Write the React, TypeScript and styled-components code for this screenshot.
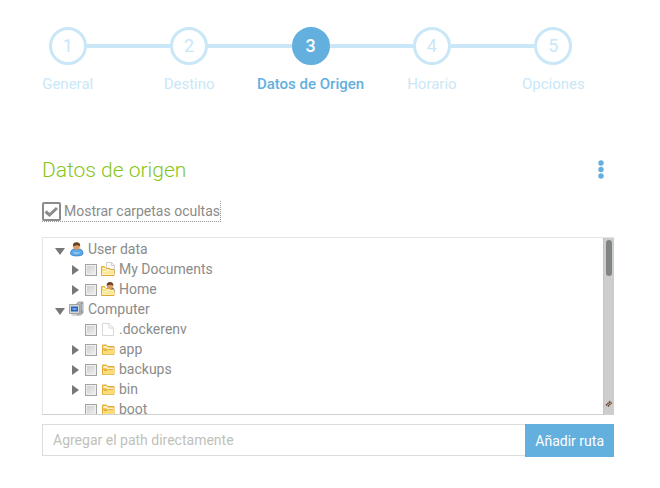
import React, { useState } from "react";
import styled, { createGlobalStyle } from "styled-components";

const GlobalStyle = createGlobalStyle`
  * { box-sizing: border-box; }
  body {
    margin: 0;
    background: #fff;
    color: #8b8b8b;
    font-family: Roboto, "Liberation Sans", sans-serif;
    font-size: 14px;
    line-height: 20px;
  }
  button, input { font: inherit; }
`;

const Page = styled.main`
  padding: 27px 46px 30px 42px;
`;

const Steps = styled.ol`
  display: grid;
  grid-template-columns: repeat(5, 1fr);
  list-style: none;
  margin: 0 0 0 -35px;
  padding: 0;
`;

const Step = styled.li<{ $active: boolean }>`
  text-align: center;
  font-size: 15px;
  font-weight: ${(p) => (p.$active ? 500 : 400)};
  color: ${(p) => (p.$active ? "#63afde" : "#c9e7f7")};
`;

const Track = styled.div`
  display: flex;
  align-items: center;
  margin-bottom: 9px;
`;

const Line = styled.span<{ $hidden: boolean }>`
  flex: 1;
  height: 4px;
  background: ${(p) => (p.$hidden ? "transparent" : "#c9e7f7")};
`;

const Circle = styled.span<{ $active: boolean }>`
  width: 38px;
  height: 38px;
  border-radius: 50%;
  border: 3px solid ${(p) => (p.$active ? "#63afde" : "#c9e7f7")};
  background: ${(p) => (p.$active ? "#63afde" : "#fff")};
  color: ${(p) => (p.$active ? "#fff" : "#c9e7f7")};
  font-size: 18px;
  line-height: 32px;
`;

const Header = styled.header`
  display: flex;
  align-items: center;
  justify-content: space-between;
  margin: 61px 0 16px;
`;

const Title = styled.h1`
  margin: 0;
  color: #86c616;
  font-size: 21px;
  font-weight: 300;
  line-height: 30px;
`;

const MenuButton = styled.button`
  display: flex;
  padding: 4px 10px;
  border: 0;
  background: none;
  cursor: pointer;
`;

const HiddenToggle = styled.label`
  display: flex;
  align-items: center;
  gap: 3px;
  width: max-content;
  height: 21px;
  margin-bottom: 15px;
  border: 1px dotted #999;
  border-width: 0 1px 1px 0;
`;

const ToggleBox = styled.input`
  appearance: none;
  width: 19px;
  height: 19px;
  margin: 0;
  border: 2px solid #8b8b8b;
  border-radius: 2px;
  background: #fff;
  &:checked {
    background: #fff
      url("data:image/svg+xml,%3Csvg xmlns='http://www.w3.org/2000/svg' viewBox='0 0 15 15'%3E%3Cpath d='M1.500 7.500 5.500 11 13 4' fill='none' stroke='%238b8b8b' stroke-width='3'/%3E%3C/svg%3E")
      center / 15px 15px no-repeat;
  }
`;

const TreeFrame = styled.div`
  display: flex;
  height: 178px;
  border: 1px solid #e4e4e0;
  border-bottom-color: #d0d0d0;
  border-right: 0;
`;

const Tree = styled.ul`
  flex: 1;
  margin: 0;
  padding: 1px 0 0 10px;
  list-style: none;
  overflow-y: auto;
  scrollbar-width: none;
`;

const Row = styled.li<{ $level: number }>`
  display: flex;
  align-items: center;
  height: 20px;
  padding-left: ${(p) => p.$level * 16}px;
  white-space: nowrap;
`;

const Caret = styled.button`
  display: flex;
  width: 16px;
  height: 16px;
  padding: 0;
  border: 0;
  background: none;
`;

const Indent = styled.span`
  width: 16px;
`;

const RowLabel = styled.label`
  display: flex;
  align-items: center;
  gap: 3px;
`;

const RowCheck = styled.input`
  appearance: none;
  width: 12px;
  height: 12px;
  margin: 2px 0 0;
  border: 1px solid #a3a3a3;
  background: linear-gradient(135deg, #ccc, #f2f2f2);
  box-shadow: inset 0 0 0 1px #f0f0f0;
  &:checked { background: #63afde; }
`;

const ScrollRail = styled.div`
  display: flex;
  flex-direction: column;
  align-items: center;
  justify-content: space-between;
  width: 11px;
  padding: 2px 0 7px;
  background: #cdcdcd;
  border-left: 1px dotted #bbb;
`;

const Thumb = styled.span`
  width: 6px;
  height: 36px;
  border-radius: 3px;
  background: #808583;
`;

const PathForm = styled.form`
  display: flex;
  margin-top: 9px;
`;

const PathInput = styled.input`
  flex: 1;
  min-width: 0;
  height: 32px;
  padding: 0 10px;
  border: 1px solid #dcdcdc;
  border-right: 0;
  border-radius: 0;
  color: #8b8b8b;
  outline: 0;
  &::placeholder { color: #bfbfbb; opacity: 1; }
`;

const AddButton = styled.button`
  height: 33px;
  padding: 0 10px;
  border: 0;
  background: #63afde;
  color: #fff;
`;

type IconName = "user" | "docs" | "home" | "computer" | "file" | "folder";

const Folder = () => (
  <>
    <path d="M2.500 13.500v-9.500h4l1 1.500h6.500v8z" fill="#f2c14c" stroke="#e2ab35" />
    <path d="M4 7V6h2.500l1 1.500H13v1" fill="none" stroke="#fffbe6" strokeWidth="1.300" />
    <path d="M3.500 13V9.500H7l1-1h5.500V13z" fill="#f9dc72" stroke="#fbe9a4" strokeWidth=".6" />
    <path d="M4 9.500h3l1-1.200h5" fill="none" stroke="#d99c2c" strokeWidth=".8" />
  </>
);

const LowFolder = () => (
  <>
    <path d="M1.500 14.500v-9h3l1 2h4.500v1h4v6z" fill="#f9de7c" stroke="#e2a733" />
    <path d="M3 7.500h2.500l1 1.500h3" fill="none" stroke="#fffbe6" />
    <path d="M2.500 13.500v-3H7l1-1h5.500v4z" fill="#fbe694" stroke="#fff8d8" strokeWidth=".7" />
  </>
);

function Icon({ name }: { name: IconName }) {
  return (
    <svg width="16" height="16" viewBox="0 0 16 16" aria-hidden="true">
      {name === "folder" && <Folder />}
      {name === "file" && (
        <path d="M2.500 2.500h6.500l4.500 4.500v7.500h-11zM9 2.500v4.500h4.500" fill="#fff" stroke="#d8d8d8" />
      )}
      {name === "docs" && (
        <>
          <path d="M6.500 1.500h5l3 3v8h-8zM11.500 1.500v3h3" fill="#fafafa" stroke="#cfcfcf" />
          <LowFolder />
        </>
      )}
      {name === "home" && (
        <>
          <path d="M6 10V9q0-3 4-3t4.500 3v2H6z" fill="#4c7796" />
          <circle cx="10" cy="5" r="3" fill="#dc9b62" />
          <path d="M6.500 4.800Q6.500 1 10 1t3.500 3.800Q11 2.800 6.500 4.800z" fill="#6a4024" />
          <LowFolder />
        </>
      )}
      {name === "user" && (
        <>
          <path d="M1.500 13q0-5 4-5h4.500q4 0 4 5-1 2-6.300 2t-6.200-2z" fill="#5aa8e6" stroke="#3d83c4" strokeWidth=".8" />
          <circle cx="7.500" cy="5.500" r="3.300" fill="#dc9a64" />
          <path d="M4 5.500Q3.500 1.300 7.500 1.300t3.700 4.200Q8.500 3.200 4 5.500z" fill="#67401f" />
          <path d="M4 11q3.500 4 7 0" fill="#8ac5f3" stroke="#8ac5f3" />
        </>
      )}
      {name === "computer" && (
        <>
          <path d="M8 3V2l2-1h4v11l-2.500 2H8z" fill="#bfc2c4" stroke="#8f9498" strokeWidth=".8" />
          <path d="M12.300 2v10.500" stroke="#83888d" strokeWidth="1.200" />
          <path d="M13.500 4h-1M13.500 6h-1M13.500 8h-1" stroke="#ecedee" />
          <path d="M.5 3.500h10v9H.5z" fill="#d3d5d7" stroke="#a0a4a8" />
          <path d="M2 5.500h7v5H2z" fill="#2c66bd" />
          <path d="M3.500 7h4v2h-4z" fill="#67a4ec" />
          <path d="M2.500 14h7" stroke="#a9adb0" />
        </>
      )}
    </svg>
  );
}

interface Entry {
  label: string;
  level: number;
  icon: IconName;
  caret?: "open" | "closed";
}

const entries: Entry[] = [
  { label: "User data", level: 0, icon: "user", caret: "open" },
  { label: "My Documents", level: 1, icon: "docs", caret: "closed" },
  { label: "Home", level: 1, icon: "home", caret: "closed" },
  { label: "Computer", level: 0, icon: "computer", caret: "open" },
  { label: ".dockerenv", level: 1, icon: "file" },
  { label: "app", level: 1, icon: "folder", caret: "closed" },
  { label: "backups", level: 1, icon: "folder", caret: "closed" },
  { label: "bin", level: 1, icon: "folder", caret: "closed" },
  { label: "boot", level: 1, icon: "folder" },
];

const steps = ["General", "Destino", "Datos de Origen", "Horario", "Opciones"];
const current = 2;

function TreeRow({ entry }: { entry: Entry }) {
  return (
    <Row $level={entry.level}>
      {entry.caret ? (
        <Caret type="button" aria-label={entry.label} aria-expanded={entry.caret === "open"}>
          <svg width="16" height="16" viewBox="0 0 16 16" aria-hidden="true">
            <path d={entry.caret === "open" ? "M2 7h10l-5 7z" : "M3 4v10l7-5z"} fill="#777" />
          </svg>
        </Caret>
      ) : (
        <Indent />
      )}
      <RowLabel>
        {entry.level > 0 && <RowCheck type="checkbox" />}
        <Icon name={entry.icon} />
        {entry.label}
      </RowLabel>
    </Row>
  );
}

export default function App() {
  const [showHidden, setShowHidden] = useState(true);
  const [path, setPath] = useState("");

  return (
    <>
      <GlobalStyle />
      <Page>
        <Steps>
          {steps.map((label, i) => (
            <Step key={label} $active={i === current} aria-current={i === current ? "step" : undefined}>
              <Track>
                <Line $hidden={i === 0} />
                <Circle $active={i === current}>{i + 1}</Circle>
                <Line $hidden={i === steps.length - 1} />
              </Track>
              {label}
            </Step>
          ))}
        </Steps>

        <Header>
          <Title>Datos de origen</Title>
          <MenuButton type="button" aria-label="Menú">
            <svg width="6" height="20" viewBox="0 0 6 20" fill="#63afde" aria-hidden="true">
              <circle cx="3" cy="3" r="2.700" />
              <circle cx="3" cy="9.500" r="2.700" />
              <circle cx="3" cy="16" r="2.700" />
            </svg>
          </MenuButton>
        </Header>

        <HiddenToggle>
          <ToggleBox
            type="checkbox"
            checked={showHidden}
            onChange={(e) => setShowHidden(e.target.checked)}
          />
          Mostrar carpetas ocultas
        </HiddenToggle>

        <TreeFrame>
          <Tree>
            {entries.map((entry) => (
              <TreeRow key={entry.label} entry={entry} />
            ))}
          </Tree>
          <ScrollRail aria-hidden="true">
            <Thumb />
            <svg width="8" height="8" viewBox="0 0 8 8">
              <path d="M1 6.500 5.500 2M3 7.500 7 3" stroke="#70472f" strokeWidth="1.600" strokeDasharray="1.500 .5" />
            </svg>
          </ScrollRail>
        </TreeFrame>

        <PathForm onSubmit={(e) => e.preventDefault()}>
          <PathInput
            type="text"
            aria-label="Agregar el path directamente"
            placeholder="Agregar el path directamente"
            value={path}
            onChange={(e) => setPath(e.target.value)}
          />
          <AddButton type="submit">Añadir ruta</AddButton>
        </PathForm>
      </Page>
    </>
  );
}
